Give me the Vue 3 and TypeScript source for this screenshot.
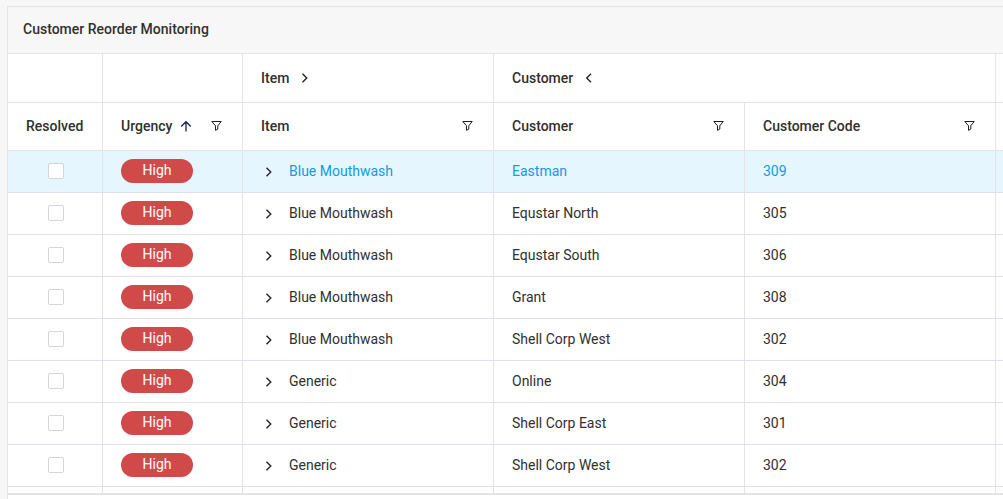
<script setup lang="ts">
import { ref } from 'vue'

interface Row {
  id: number
  item: string
  customer: string
  code: string
  resolved: boolean
}

const rows = ref<Row[]>([
  { id: 1, item: 'Blue Mouthwash', customer: 'Eastman', code: '309', resolved: false },
  { id: 2, item: 'Blue Mouthwash', customer: 'Equstar North', code: '305', resolved: false },
  { id: 3, item: 'Blue Mouthwash', customer: 'Equstar South', code: '306', resolved: false },
  { id: 4, item: 'Blue Mouthwash', customer: 'Grant', code: '308', resolved: false },
  { id: 5, item: 'Blue Mouthwash', customer: 'Shell Corp West', code: '302', resolved: false },
  { id: 6, item: 'Generic', customer: 'Online', code: '304', resolved: false },
  { id: 7, item: 'Generic', customer: 'Shell Corp East', code: '301', resolved: false },
  { id: 8, item: 'Generic', customer: 'Shell Corp West', code: '302', resolved: false },
])
const selected = ref(1)
</script>

<template>
  <main class="page">
    <section class="panel">
      <h1 class="title">Customer Reorder Monitoring</h1>
      <div class="viewport">
        <table class="grid">
          <colgroup>
            <col class="c-resolved" />
            <col class="c-urgency" />
            <col class="c-wide" />
            <col class="c-wide" />
            <col class="c-wide" />
            <col />
          </colgroup>
          <thead>
            <tr class="groups">
              <td></td>
              <td></td>
              <th scope="colgroup">
                <div class="head">
                  <span>Item</span>
                  <button class="icon-btn toggle" type="button" aria-label="Expand Item columns">
                    <svg width="8" height="10" viewBox="0 0 8 10"><path d="M1.5 .7 5.8 5 1.5 9.3" /></svg>
                  </button>
                </div>
              </th>
              <th scope="colgroup" colspan="2">
                <div class="head">
                  <span>Customer</span>
                  <button class="icon-btn toggle" type="button" aria-label="Collapse Customer columns">
                    <svg width="8" height="10" viewBox="0 0 8 10"><path d="M6 .7 1.7 5 6 9.3" /></svg>
                  </button>
                </div>
              </th>
              <td></td>
            </tr>
            <tr class="columns">
              <th scope="col"><div class="head">Resolved</div></th>
              <th scope="col" aria-sort="ascending">
                <div class="head">
                  <span>Urgency</span>
                  <svg class="sort" width="12" height="12" viewBox="0 0 12 12"><path d="M6 11.5V1.8M1.2 6.5 6 1.7l4.8 4.8" /></svg>
                  <button class="icon-btn filter" type="button" aria-label="Filter Urgency">
                    <svg width="11" height="10" viewBox="0 0 11 10"><path d="M.8.5h9.4L6.8 4.8v3.3L4.5 9.3V4.8z" /></svg>
                  </button>
                </div>
              </th>
              <th v-for="name in ['Item', 'Customer', 'Customer Code']" :key="name" scope="col">
                <div class="head">
                  <span>{{ name }}</span>
                  <button class="icon-btn filter" type="button" :aria-label="`Filter ${name}`">
                    <svg width="11" height="10" viewBox="0 0 11 10"><path d="M.8.5h9.4L6.8 4.8v3.3L4.5 9.3V4.8z" /></svg>
                  </button>
                </div>
              </th>
              <td></td>
            </tr>
          </thead>
          <tbody>
            <tr v-for="row in rows" :key="row.id" :class="{ selected: row.id === selected }" @click="selected = row.id">
              <td class="check">
                <input v-model="row.resolved" type="checkbox" :aria-label="`Resolved: ${row.item}, ${row.customer}`" />
              </td>
              <td><span class="pill">High</span></td>
              <td>
                <div class="item">
                  <button class="icon-btn" type="button" :aria-label="`Expand ${row.item}`">
                    <svg width="8" height="12" viewBox="0 -2 8 12"><path d="M1.5 .7 5.8 5 1.5 9.3" /></svg>
                  </button>
                  <span>{{ row.item }}</span>
                </div>
              </td>
              <td>{{ row.customer }}</td>
              <td>{{ row.code }}</td>
              <td></td>
            </tr>
            <tr aria-hidden="true">
              <td v-for="n in 6" :key="n"></td>
            </tr>
          </tbody>
        </table>
      </div>
      <div class="scroll-track"></div>
    </section>
  </main>
</template>

<style>
body {
  background: #f7f7f7;
}
</style>

<style scoped>
.page {
  box-sizing: border-box;
  height: 100vh;
  padding: 6px 0 0 7px;
  font: 14px/20px Roboto, "Liberation Sans", sans-serif;
  color: #303030;
}
.panel {
  box-sizing: border-box;
  display: flex;
  flex-direction: column;
  height: 100%;
  border: solid #e4e4e4;
  border-width: 1px 0 0 1px;
  background: #fff;
}
.title {
  margin: 0;
  padding: 12px 15px 14px;
  border-bottom: 1px solid #e4e4e4;
  background: #f7f7f7;
  font-size: 14px;
  font-weight: 500;
  line-height: 20px;
}
.viewport {
  flex: 1;
  min-height: 0;
  overflow: hidden;
}
.grid {
  width: 100%;
  table-layout: fixed;
  border-collapse: separate;
  border-spacing: 0;
}
.c-resolved {
  width: 95px;
}
.c-urgency {
  width: 140px;
}
.c-wide {
  width: 251px;
}
th,
td {
  box-sizing: border-box;
  height: 42px;
  padding: 0 18px;
  border: solid #e4e4e4;
  border-width: 0 1px 1px 0;
  text-align: left;
  font-weight: 400;
  white-space: nowrap;
}
th:last-child,
td:last-child {
  padding: 0;
  border-right: 0;
}
th {
  font-weight: 500;
}
.groups > * {
  height: 49px;
}
.columns > * {
  height: 48px;
  padding-bottom: 2px;
}
tbody td {
  padding-bottom: 2px;
  border-bottom-color: #dde1ea;
}
.head {
  display: flex;
  align-items: center;
}
.icon-btn {
  display: flex;
  padding: 0;
  border: 0;
  background: none;
  color: inherit;
}
.toggle {
  margin-left: 12px;
}
.sort {
  margin-left: 8px;
}
.filter {
  margin: 0 2px 0 auto;
}
svg {
  display: block;
  fill: none;
  stroke: #1b1b26;
  stroke-width: 1.3;
}
.sort {
  stroke: #1c1c5c;
}
.filter svg {
  stroke-width: 1;
}
tbody .check {
  padding: 0 17px 0 18px;
}
.check input {
  appearance: none;
  display: block;
  box-sizing: border-box;
  width: 16px;
  height: 16px;
  margin: 0 auto;
  border: 1px solid #d6d6d6;
  border-radius: 2px;
  background: #fff;
}
tbody .check {
  padding: 0 16px 2px 18px;
}
.check input:checked {
  background: #1a9be0;
}
.pill {
  display: block;
  box-sizing: border-box;
  width: 72px;
  height: 24px;
  border-radius: 12px;
  background: #d14a4a;
  color: #fff;
  text-align: center;
  line-height: 23px;
}
.item {
  display: flex;
  align-items: center;
  gap: 16px;
  padding-left: 4px;
}
.selected td {
  background: #e6f6fe;
  color: #149be0;
}
.scroll-track {
  height: 4px;
  border-top: 2px solid #e4e4e4;
}
</style>
